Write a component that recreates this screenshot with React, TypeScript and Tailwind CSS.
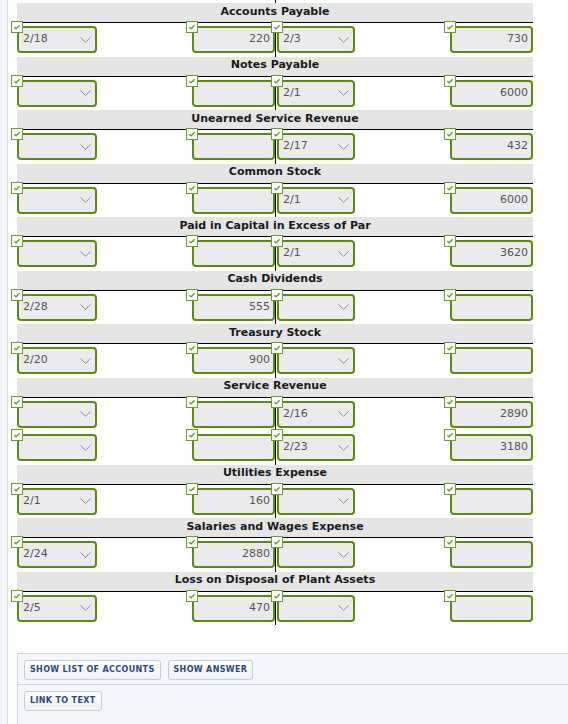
import React from "react";

type Row = { ld: string; la: string; rd: string; ra: string };
type Block = { title: string; rows: Row[] };

const blocks: Block[] = [
  { title: "Accounts Payable", rows: [{ ld: "2/18", la: "220", rd: "2/3", ra: "730" }] },
  { title: "Notes Payable", rows: [{ ld: "", la: "", rd: "2/1", ra: "6000" }] },
  { title: "Unearned Service Revenue", rows: [{ ld: "", la: "", rd: "2/17", ra: "432" }] },
  { title: "Common Stock", rows: [{ ld: "", la: "", rd: "2/1", ra: "6000" }] },
  { title: "Paid in Capital in Excess of Par", rows: [{ ld: "", la: "", rd: "2/1", ra: "3620" }] },
  { title: "Cash Dividends", rows: [{ ld: "2/28", la: "555", rd: "", ra: "" }] },
  { title: "Treasury Stock", rows: [{ ld: "2/20", la: "900", rd: "", ra: "" }] },
  {
    title: "Service Revenue",
    rows: [
      { ld: "", la: "", rd: "2/16", ra: "2890" },
      { ld: "", la: "", rd: "2/23", ra: "3180" },
    ],
  },
  { title: "Utilities Expense", rows: [{ ld: "2/1", la: "160", rd: "", ra: "" }] },
  { title: "Salaries and Wages Expense", rows: [{ ld: "2/24", la: "2880", rd: "", ra: "" }] },
  { title: "Loss on Disposal of Plant Assets", rows: [{ ld: "2/5", la: "470", rd: "", ra: "" }] },
];

function Check() {
  return (
    <span className="absolute -left-[6px] -top-[5px] z-10 flex h-[12px] w-[12px] items-center justify-center border border-[#6f9b2c] bg-white">
      <svg width="8" height="8" viewBox="0 0 8 8">
        <path d="M1.3 4.2 L3.1 5.8 L6.6 2.2" fill="none" stroke="#6a9a24" strokeWidth="1.3" />
      </svg>
    </span>
  );
}

function SelectBox({ value, w }: { value: string; w: string }) {
  return (
    <div className={`relative ${w} h-[27px]`}>
      <Check />
      <div className="flex h-full w-full items-center justify-between rounded-[4px] border-2 border-[#5c8b0e] bg-[#ebebed] pl-[4px] pr-[4px] text-[11px] text-[#555]">
        <span>{value}</span>
        <svg width="11" height="6" viewBox="0 0 11 6">
          <path d="M0.5 0.5 L5.5 5.3 L10.5 0.5" fill="none" stroke="#8a8a8a" strokeWidth="1" />
        </svg>
      </div>
    </div>
  );
}

function AmountBox({ value }: { value: string }) {
  return (
    <div className="relative h-[27px] w-[83px]">
      <Check />
      <div className="flex h-full w-full items-center justify-end rounded-[4px] border-2 border-[#5c8b0e] bg-[#ebebed] pr-[3px] text-[11px] text-[#555]">
        {value}
      </div>
    </div>
  );
}

function TBlock({ block }: { block: Block }) {
  return (
    <div>
      <div className="flex h-[19px] items-center justify-center bg-[#e5e5e5] pb-[1px] text-[11px] font-bold text-[#1a1a1a]">
        {block.title}
      </div>
      <div className="border-t border-black">
        {block.rows.map((r, i) => (
          <div key={i} className="flex">
            <div className="flex w-[258px] justify-between pb-[3.5px] pt-[3px]">
              <SelectBox value={r.ld} w="w-[80px]" />
              <AmountBox value={r.la} />
            </div>
            <div className="flex w-[258px] justify-between border-l border-black pb-[3.5px] pl-[1px] pt-[3px]">
              <SelectBox value={r.rd} w="w-[78px]" />
              <AmountBox value={r.ra} />
            </div>
          </div>
        ))}
      </div>
    </div>
  );
}

function Btn({ children }: { children: React.ReactNode }) {
  return (
    <button className="h-[20px] rounded-[3px] border border-[#c6cdd8] bg-gradient-to-b from-white to-[#eef1f5] px-[5px] text-[8px] font-bold tracking-[0.35px] text-[#2d4a7a]">
      {children}
    </button>
  );
}

export default function App() {
  return (
    <div className="relative flex h-[724px] w-[568px] overflow-hidden bg-white font-['DejaVu_Sans',sans-serif]">
      <div className="h-full w-[8px] shrink-0 border-r border-[#d6dde6] bg-[#f3f6fa]" />
      <div className="ml-[9px] flex flex-col">
        <div className="w-[516px]">
          <div className="flex h-[3px]">
            <div className="w-[258px]" />
            <div className="w-[258px] border-l border-black" />
          </div>
          {blocks.map((b) => (
            <TBlock key={b.title} block={b} />
          ))}
        </div>
        <div className="mt-[28px] w-[560px] border border-[#cfd6e0] bg-[#f3f6fa]">
          <div className="flex gap-[7px] border-b border-[#cfd6e0] pb-[4px] pl-[6px] pt-[6px]">
            <Btn>SHOW LIST OF ACCOUNTS</Btn>
            <Btn>SHOW ANSWER</Btn>
          </div>
          <div className="flex pb-[13px] pl-[6px] pt-[6px]">
            <Btn>LINK TO TEXT</Btn>
          </div>
        </div>
      </div>
    </div>
  );
}
